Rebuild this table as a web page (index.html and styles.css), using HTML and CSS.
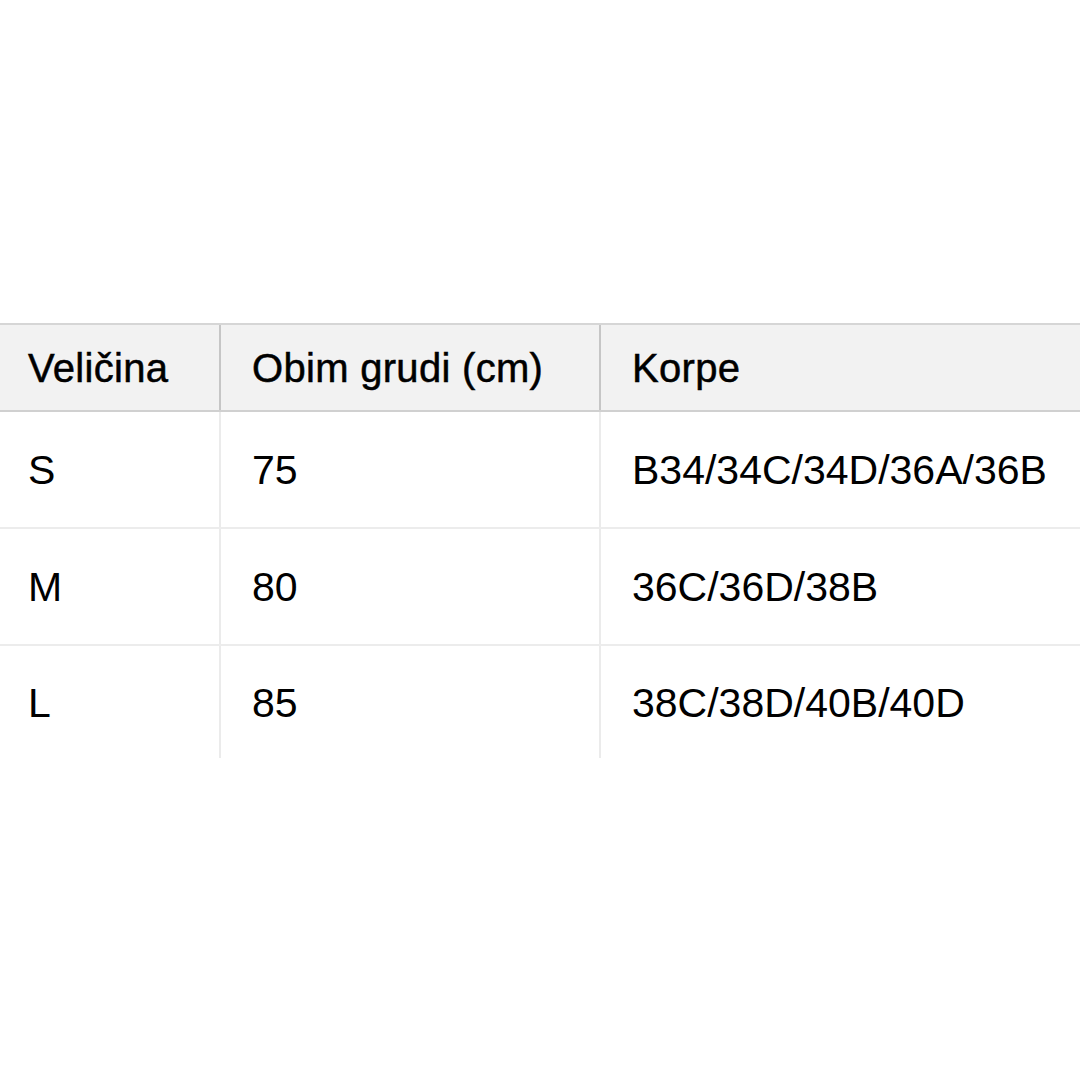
FILE: index.html
```html
<!DOCTYPE html>
<html lang="sr">
<head>
<meta charset="utf-8">
<title>Tabela veličina</title>
<link rel="stylesheet" href="styles.css">
</head>
<body>
<div class="page">
  <div class="size-table">
    <div class="row head">
      <div class="cell">Veličina</div>
      <div class="cell">Obim grudi (cm)</div>
      <div class="cell">Korpe</div>
    </div>
    <div class="row">
      <div class="cell">S</div>
      <div class="cell">75</div>
      <div class="cell">B34/34C/34D/36A/36B</div>
    </div>
    <div class="row">
      <div class="cell">M</div>
      <div class="cell">80</div>
      <div class="cell">36C/36D/38B</div>
    </div>
    <div class="row last">
      <div class="cell">L</div>
      <div class="cell">85</div>
      <div class="cell">38C/38D/40B/40D</div>
    </div>
  </div>
</div>
</body>
</html>
```

FILE: styles.css
```css
html, body {
  margin: 0;
  padding: 0;
  background: #ffffff;
  overflow: hidden;
}
.page {
  width: 1080px;
  height: 1080px;
  padding-top: 323px;
  box-sizing: border-box;
  overflow: hidden;
}
.size-table {
  width: 1240px;
  font-family: "Liberation Sans", Arial, sans-serif;
  font-size: 41px;
  color: #000;
}
.row {
  display: grid;
  grid-template-columns: 221px 380px 1fr;
  height: 117px;
  border-bottom: 2px solid #ececec;
  box-sizing: border-box;
}
.row.head {
  height: 89px;
  background: #f2f2f2;
  border-top: 2px solid #d6d6d6;
  border-bottom: 2px solid #d0d0d0;
  font-size: 40px;
}
.row.last {
  height: 112px;
  border-bottom: none;
}
.cell {
  display: flex;
  align-items: center;
  padding-left: 31px;
  padding-top: 2px;
  border-right: 2px solid #ebebeb;
  white-space: nowrap;
}
.row .cell:first-child {
  padding-left: 28px;
}
.row .cell:last-child {
  border-right: none;
}
.head .cell {
  border-right-color: #c6c6c6;
  -webkit-text-stroke: 0.5px #000;
  letter-spacing: 0.3px;
}
.head .cell:last-child {
  border-right: none;
}
```
